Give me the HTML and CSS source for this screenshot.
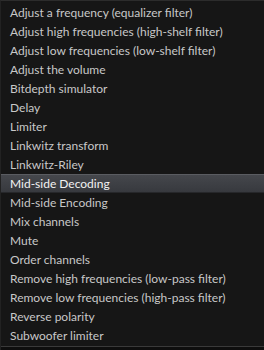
FILE: index.html
```html
<!DOCTYPE html>
<html lang="en">
  <head>
    <meta charset="UTF-8" />
    <title>Effects menu</title>
    <link rel="stylesheet" href="styles.css">
  </head>
  <body>
    <div class="menu">
      <ul class="menu-list">
        <li class="menu-item">Adjust a frequency (equalizer filter)</li>
        <li class="menu-item">Adjust high frequencies (high-shelf filter)</li>
        <li class="menu-item">Adjust low frequencies (low-shelf filter)</li>
        <li class="menu-item">Adjust the volume</li>
        <li class="menu-item">Bitdepth simulator</li>
        <li class="menu-item">Delay</li>
        <li class="menu-item">Limiter</li>
        <li class="menu-item">Linkwitz transform</li>
        <li class="menu-item">Linkwitz-Riley</li>
        <li class="menu-item selected">Mid-side Decoding</li>
        <li class="menu-item">Mid-side Encoding</li>
        <li class="menu-item">Mix channels</li>
        <li class="menu-item">Mute</li>
        <li class="menu-item">Order channels</li>
        <li class="menu-item">Remove high frequencies (low-pass filter)</li>
        <li class="menu-item">Remove low frequencies (high-pass filter)</li>
        <li class="menu-item">Reverse polarity</li>
        <li class="menu-item">Subwoofer limiter</li>
      </ul>
      <div class="menu-footer"></div>
    </div>
  </body>
</html>
```

FILE: styles.css
```css
/* Page */
body {
  margin: 0;
  padding: 0;
  background-color: #0c0c0c;
  font-family: Lato, "Open Sans", sans-serif;
}

/* Dropdown panel */
.menu {
  width: 264px;
  height: 350px;
  background-color: #161616;
  border-top: 1px solid #2c2c2c;
  border-left: 1px solid #222;
  box-sizing: border-box;
  display: flex;
  flex-direction: column;
}

.menu-list {
  list-style: none;
  margin: 0;
  padding: 2px 0 0 0;
}

/* Single entry */
.menu-item {
  height: 19px;
  line-height: 19px;
  padding-left: 9px;
  font-size: 12px;
  color: #c8c8c8;
  white-space: nowrap;
  box-sizing: border-box;
}

/* Highlighted entry */
.menu-item.selected {
  background-image: linear-gradient(to bottom, #45474c, #37393e);
  border-top: 1px solid #5a5c61;
  border-bottom: 1px solid #26272a;
  line-height: 17px;
  color: #f2f2f2;
}

/* Bottom edge */
.menu-footer {
  margin-top: 1px;
  border-top: 1px solid #3a3a3a;
  flex: 1;
  background-color: #0e0e0e;
}
```
